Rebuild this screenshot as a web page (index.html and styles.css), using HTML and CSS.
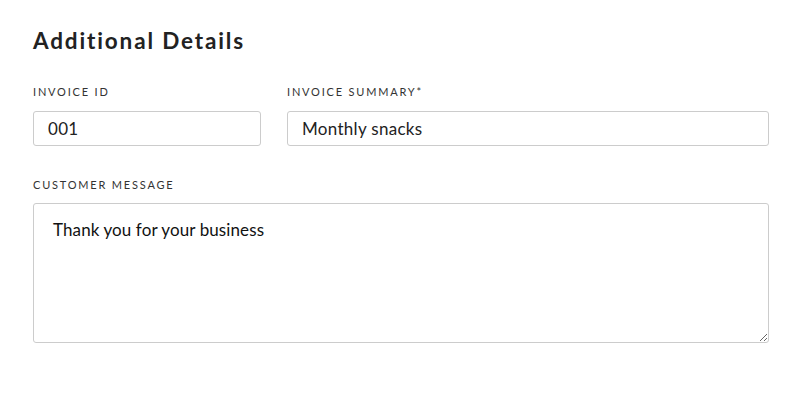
FILE: index.html
```html
<!DOCTYPE html>
<html>
<head>
<meta charset="utf-8">
<link rel="stylesheet" href="styles.css">
</head>
<body>
<div class="form">
  <h2 class="title">Additional Details</h2>
  <div class="row">
    <div class="field field-id">
      <label class="label">INVOICE ID</label>
      <input class="input" type="text" value="001">
    </div>
    <div class="field field-summary">
      <label class="label">INVOICE SUMMARY*</label>
      <input class="input" type="text" value="Monthly snacks">
    </div>
  </div>
  <div class="field">
    <label class="label label-msg">CUSTOMER MESSAGE</label>
    <textarea class="textarea">Thank you for your business</textarea>
  </div>
</div>
</body>
</html>
```
FILE: styles.css
```css
html, body {
  margin: 0;
  padding: 0;
  background: #fff;
}
.form {
  width: 736px;
  padding: 26px 0 0 33px;
  font-family: Lato, "Noto Sans", sans-serif;
  color: #222;
}
.title {
  margin: 0 0 29px 0;
  font-size: 22.5px;
  line-height: 30px;
  font-weight: 700;
  letter-spacing: 1.85px;
  color: #222;
}
.row {
  display: flex;
  gap: 26px;
  margin-bottom: 32px;
}
.field {
  display: flex;
  flex-direction: column;
}
.field-id {
  width: 228px;
}
.field-summary {
  flex: 1;
}
.label {
  font-size: 11px;
  letter-spacing: 1.8px;
  line-height: 14px;
  color: #333;
  margin-bottom: 12px;
}
.label-msg {
  margin-bottom: 11px;
}
.input {
  box-sizing: border-box;
  height: 35px;
  border: 1px solid #ccc;
  border-radius: 3px;
  padding: 0 14px 1px;
  font-family: Lato, "Noto Sans", sans-serif;
  font-size: 17px;
  letter-spacing: 0.3px;
  color: #222;
  outline: none;
  margin: 0;
}
.textarea {
  box-sizing: border-box;
  width: 736px;
  height: 140px;
  border: 1px solid #ccc;
  border-radius: 3px;
  padding: 15px 19px;
  font-family: Lato, "Noto Sans", sans-serif;
  font-size: 17px;
  letter-spacing: 0.1px;
  line-height: 22px;
  color: #111;
  outline: none;
  margin: 0;
  resize: vertical;
}
```
